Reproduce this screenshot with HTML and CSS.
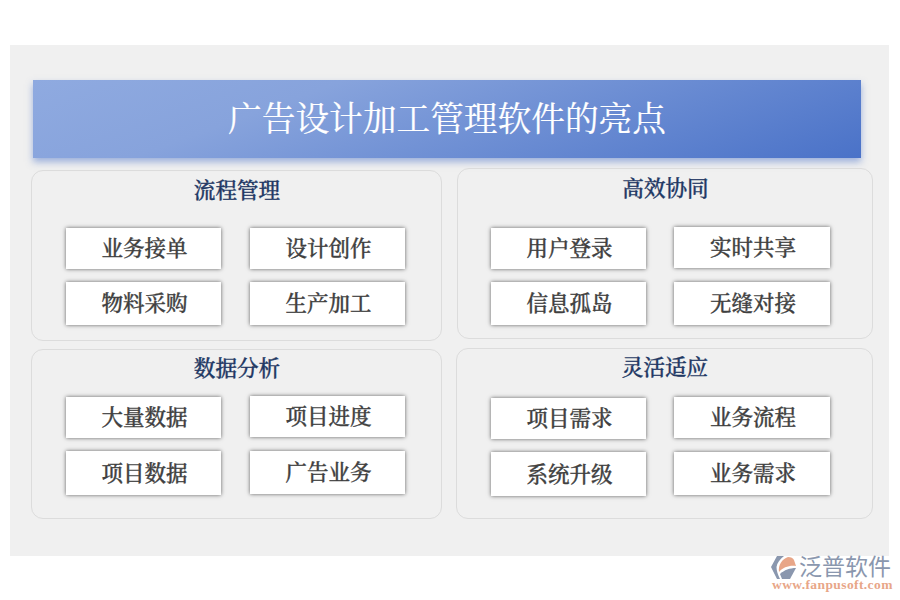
FILE: index.html
```html
<!DOCTYPE html>
<html lang="zh-CN">
<head>
<meta charset="utf-8">
<title>广告设计加工管理软件的亮点</title>
<link rel="stylesheet" href="styles.css">
</head>
<body>
<main class="canvas">
  <h1 class="banner">广告设计加工管理软件的亮点</h1>
  <div class="board">
    <section class="panel p1">
      <h2 class="panel-title">流程管理</h2>
      <div class="cells">
        <div class="cell">业务接单</div>
        <div class="cell">设计创作</div>
        <div class="cell low">物料采购</div>
        <div class="cell low">生产加工</div>
      </div>
    </section>
    <section class="panel p2">
      <h2 class="panel-title">高效协同</h2>
      <div class="cells">
        <div class="cell">用户登录</div>
        <div class="cell up">实时共享</div>
        <div class="cell low">信息孤岛</div>
        <div class="cell low">无缝对接</div>
      </div>
    </section>
    <section class="panel p3">
      <h2 class="panel-title">数据分析</h2>
      <div class="cells">
        <div class="cell">大量数据</div>
        <div class="cell up">项目进度</div>
        <div class="cell lower">项目数据</div>
        <div class="cell low">广告业务</div>
      </div>
    </section>
    <section class="panel p4">
      <h2 class="panel-title">灵活适应</h2>
      <div class="cells">
        <div class="cell">项目需求</div>
        <div class="cell up">业务流程</div>
        <div class="cell lower">系统升级</div>
        <div class="cell low">业务需求</div>
      </div>
    </section>
  </div>
</main>
<div class="logo">
  <svg class="logo-mark" width="26" height="23" viewBox="0 0 26 23" aria-hidden="true">
    <path d="M6 0H13C9 3 6 7 5.500 11C5.500 15 7 19 9 23H6L0 11Z" fill="#8a97ae"/>
    <path d="M17 1C20 1 22 2 23 4L25 10C19 9 12 11 8 16C7 9 11 3 17 1Z" fill="#e8a688"/>
    <path d="M25 12L19 23H11L9 18C13 14 19 12 25 12Z" fill="#8a97ae"/>
  </svg>
  <div class="logo-text">
    <div class="logo-name">泛普软件</div>
    <div class="logo-url">www.fanpusoft.com</div>
  </div>
</div>
</body>
</html>
```
FILE: styles.css
```css
* { box-sizing: border-box; }
html, body { margin: 0; padding: 0; }
body {
  position: relative;
  width: 900px;
  height: 600px;
  overflow: hidden;
  background: #fff;
  font-family: "Noto Serif CJK SC", "Liberation Serif", serif;
}
.canvas {
  width: 879px;
  height: 511px;
  margin: 45px 0 0 10px;
  padding: 35px 0 0 21px;
  background: #f0f0f0;
  float: left;
}
.banner {
  width: 828px;
  height: 78px;
  margin: 0 0 0 2px;
  padding-bottom: 5px;
  display: flex;
  align-items: center;
  justify-content: center;
  background: linear-gradient(160deg, #8faae0 0%, #87a3dc 30%, #4a72c8 100%);
  box-shadow: 0 4px 7px rgba(74, 114, 200, .5);
  color: #fff;
  font-size: 33.7px;
  font-weight: 400;
  -webkit-text-stroke: .2px #fff;
}
.board {
  display: grid;
  grid-template-columns: 411px 417px;
  column-gap: 14px;
  margin-top: 10px;
}
.panel {
  border: 1px solid #dcdcdc;
  border-radius: 12px;
  text-align: center;
}
.p1 { height: 171px; margin-top: 2px; }
.p2 { height: 171px; margin-left: 1px; }
.p3 { height: 170px; margin-top: 8px; }
.p4 { height: 171px; margin-top: 7px; }
.panel-title {
  margin: 0;
  height: 40px;
  padding-left: 1px;
  line-height: 36px;
  color: #1f3864;
  font-size: 21.6px;
  font-weight: 500;
  -webkit-text-stroke: .35px #1f3864;
}
.p3 .panel-title, .p4 .panel-title { line-height: 34px; }
.cells {
  display: grid;
  grid-template-columns: 155px 155px;
  column-gap: 29px;
  row-gap: 13px;
  align-items: start;
  padding: 17px 0 0 34px;
}
.p2 .cells, .p4 .cells {
  grid-template-columns: 155px 156px;
  column-gap: 28px;
}
.p2 .cells { padding: 19px 0 0 33px; }
.p3 .cells { padding-top: 7px; }
.p4 .cells { padding-top: 9px; }
.cell {
  height: 41px;
  padding: 0 0 4px 2px;
  display: flex;
  align-items: center;
  justify-content: center;
  background: #fff;
  box-shadow: 0 0 4px rgba(0, 0, 0, .6);
  color: #404040;
  font-size: 21.5px;
  font-weight: 500;
  -webkit-text-stroke: .35px #404040;
}
.cell.low { height: 43px; }
.cell.lower { height: 44px; }
.cell.up { margin-top: -1px; }
.logo {
  position: absolute;
  left: 771px;
  top: 555px;
  display: flex;
  gap: 2px;
}
.logo-mark { margin-top: 1px; }
.logo-name {
  height: 24px;
  color: #8a97ae;
  font-size: 23px;
  line-height: 25px;
  font-family: "Liberation Sans", "Noto Sans CJK SC", sans-serif;
}
.logo-url {
  margin-left: -27px;
  color: #e8a688;
  font-family: "Liberation Serif", serif;
  font-size: 13.5px;
  line-height: 11px;
  font-weight: 700;
  letter-spacing: .4px;
  white-space: nowrap;
}
```
